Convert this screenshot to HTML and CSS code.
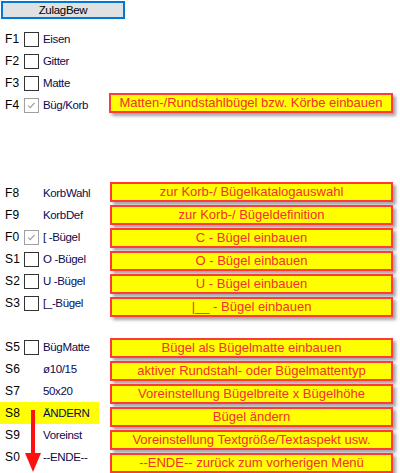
FILE: index.html
```html
<!DOCTYPE html>
<html>
<head>
<meta charset="utf-8">
<link rel="stylesheet" href="styles.css">
</head>
<body>
<div class="btn">ZulagBew</div>
<div class="main">
  <div class="keys">
    <div class="row"><span class="key">F1</span><span class="cb"></span><span class="lbl">Eisen</span></div>
    <div class="row"><span class="key">F2</span><span class="cb"></span><span class="lbl">Gitter</span></div>
    <div class="row"><span class="key">F3</span><span class="cb"></span><span class="lbl">Matte</span></div>
    <div class="row"><span class="key">F4</span><span class="cb on"><svg viewBox="0 0 15 15"><polyline points="3.5,7.5 6,10 11,4.5" /></svg></span><span class="lbl">Büg/Korb</span></div>
    <div class="row"></div>
    <div class="row"></div>
    <div class="row"></div>
    <div class="row"><span class="key">F8</span><span class="nocb"></span><span class="lbl">KorbWahl</span></div>
    <div class="row"><span class="key">F9</span><span class="nocb"></span><span class="lbl">KorbDef</span></div>
    <div class="row"><span class="key">F0</span><span class="cb on"><svg viewBox="0 0 15 15"><polyline points="3.5,7.5 6,10 11,4.5" /></svg></span><span class="lbl">[ -Bügel</span></div>
    <div class="row"><span class="key">S1</span><span class="cb"></span><span class="lbl">O -Bügel</span></div>
    <div class="row"><span class="key">S2</span><span class="cb"></span><span class="lbl">U -Bügel</span></div>
    <div class="row"><span class="key">S3</span><span class="cb"></span><span class="lbl">[_-Bügel</span></div>
    <div class="row"></div>
    <div class="row"><span class="key">S5</span><span class="cb"></span><span class="lbl">BügMatte</span></div>
    <div class="row"><span class="key">S6</span><span class="nocb"></span><span class="lbl">ø10/15</span></div>
    <div class="row"><span class="key">S7</span><span class="nocb"></span><span class="lbl">50x20</span></div>
    <div class="row hl"><span class="key">S8</span><span class="nocb"></span><span class="lbl">ÄNDERN</span></div>
    <div class="row"><span class="key">S9</span><span class="nocb"></span><span class="lbl">Voreinst</span></div>
    <div class="row"><span class="key">S0</span><span class="nocb"></span><span class="lbl">--ENDE--</span></div>
  </div>
  <div class="boxes">
    <div class="box first">Matten-/Rundstahlbügel bzw. Körbe einbauen</div>
    <div class="group g1">
      <div class="box">zur Korb-/ Bügelkatalogauswahl</div>
      <div class="box">zur Korb-/ Bügeldefinition</div>
      <div class="box">C - Bügel einbauen</div>
      <div class="box">O - Bügel einbauen</div>
      <div class="box">U - Bügel einbauen</div>
      <div class="box">|__ - Bügel einbauen</div>
    </div>
    <div class="group g2">
      <div class="box">Bügel als Bügelmatte einbauen</div>
      <div class="box">aktiver Rundstahl- oder Bügelmattentyp</div>
      <div class="box">Voreinstellung Bügelbreite x Bügelhöhe</div>
      <div class="box">Bügel ändern</div>
      <div class="box">Voreinstellung Textgröße/Textaspekt usw.</div>
      <div class="box">--ENDE-- zurück zum vorherigen Menü</div>
    </div>
  </div>
</div>
<svg class="arrow" viewBox="0 0 20 65" width="20" height="65">
  <rect x="7" y="2" width="4" height="44" fill="#ff1010"/>
  <polygon points="1,45 17,45 9,64" fill="#ff1010"/>
</svg>
</body>
</html>
```
FILE: styles.css
```css
html, body {
  margin: 0;
  padding: 0;
  background: #ffffff;
  width: 400px;
  height: 473px;
  overflow: hidden;
}
body {
  position: relative;
  font-family: "Liberation Sans", Arial, sans-serif;
}
.btn {
  box-sizing: border-box;
  margin: 1px 0 0 1px;
  width: 124px;
  height: 18px;
  border: 2px solid #0078d7;
  background: #e1e1e1;
  font-size: 11.5px;
  letter-spacing: -0.3px;
  line-height: 14px;
  text-align: center;
  color: #000;
}
.main {
  display: grid;
  grid-template-columns: 99px 283px;
  column-gap: 11px;
  margin-top: 9px;
}
.keys {
  display: flex;
  flex-direction: column;
}
.row {
  height: 22px;
  display: flex;
  align-items: center;
}
.row.hl {
  background: #ffff00;
}
.key {
  box-sizing: border-box;
  width: 24px;
  padding-left: 5px;
  font-size: 12px;
  letter-spacing: 0.2px;
  color: #000;
}
.cb, .nocb {
  box-sizing: border-box;
  width: 15px;
  height: 15px;
  margin-right: 4px;
  flex: none;
}
.cb {
  border: 1px solid #333333;
  background: #fff;
  margin-top: 1px;
}
.cb.on {
  border-color: #a0a0a0;
}
.cb svg {
  display: block;
  width: 13px;
  height: 13px;
}
.cb polyline {
  fill: none;
  stroke: #9a9a9a;
  stroke-width: 1.2;
}
.lbl {
  font-size: 11.5px;
  letter-spacing: -0.35px;
  color: #0a0a50;
  white-space: nowrap;
}
.boxes {
  display: flex;
  flex-direction: column;
}
.group {
  display: flex;
  flex-direction: column;
  gap: 3px;
}
.box {
  box-sizing: border-box;
  height: 20px;
  border: 2px solid #ff3a3a;
  background: #ffff00;
  color: #f23030;
  font-size: 13px;
  line-height: 16px;
  text-align: center;
  white-space: nowrap;
  box-shadow: 3px 3px 3px rgba(0, 0, 0, 0.35);
}
.box.first {
  margin-top: 65px;
  margin-left: -1px;
}
.g1 {
  margin-top: 69px;
}
.g2 {
  margin-top: 21px;
}
.arrow {
  position: absolute;
  left: 24px;
  top: 408px;
}
```
